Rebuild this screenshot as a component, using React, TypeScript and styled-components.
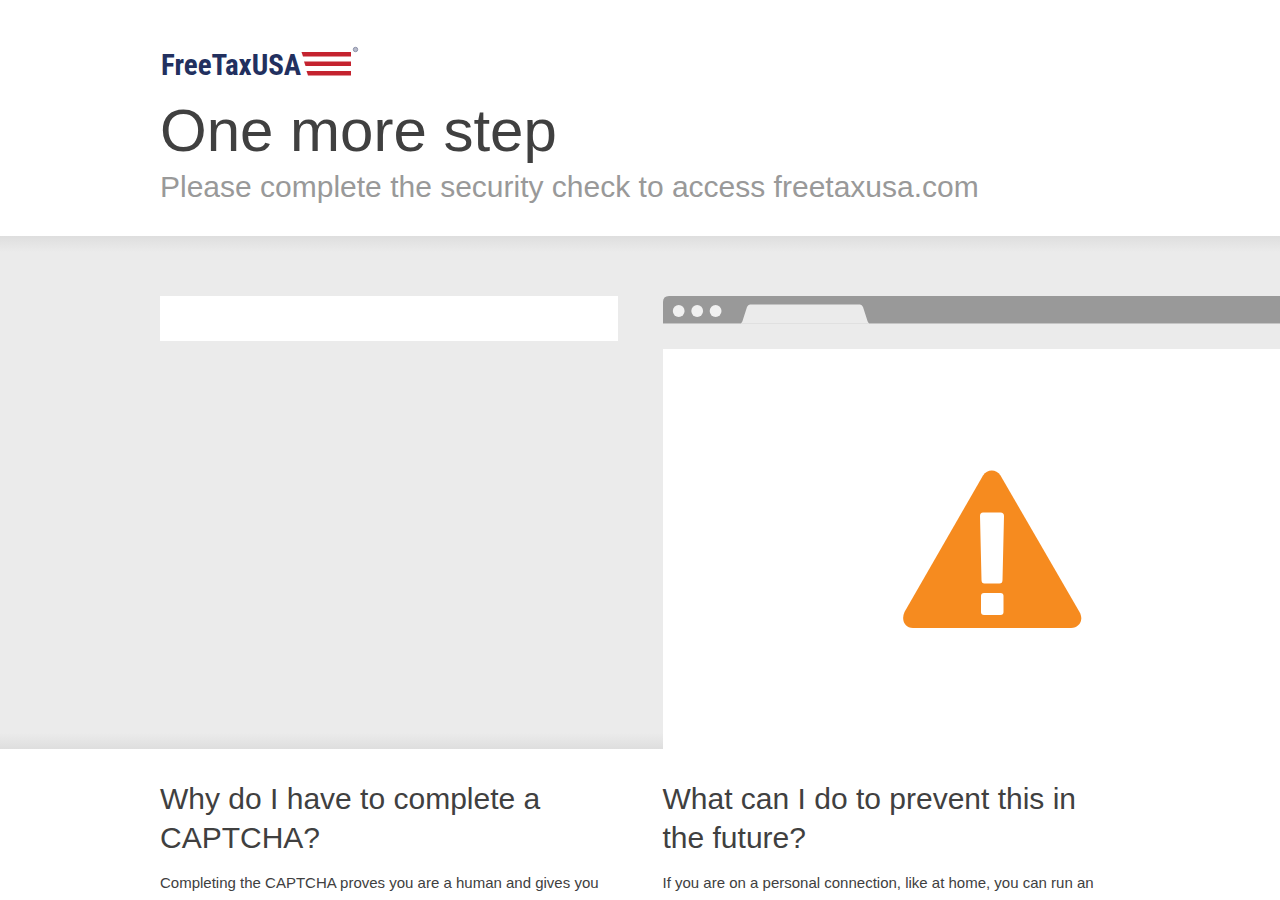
import React from "react";
import styled, { createGlobalStyle } from "styled-components";

const GlobalStyle = createGlobalStyle`
  *, *::before, *::after { box-sizing: border-box; }
  body {
    margin: 0;
    background: #fff;
    color: #404040;
    font-family: "Liberation Sans", Arial, sans-serif;
    font-size: 15px;
    line-height: 22px;
    overflow-x: hidden;
  }
  h1, h2, p { margin: 0; font-weight: 400; }
`;

const Wrapper = styled.div`
  width: 75%;
  max-width: 960px;
  margin: 0 auto;
`;

const Header = styled.header`
  padding: 40px 0 32px;
`;

const Logo = styled.svg`
  display: block;
  width: 200px;
  height: 44px;
`;

const Title = styled.h1`
  margin-top: 8px;
  font-size: 60px;
  line-height: 78px;
`;

const Subtitle = styled.h2`
  color: #999;
  font-size: 30px;
  line-height: 34px;
`;

const Challenge = styled.section`
  padding-top: 60px;
  overflow: hidden;
  background:
    linear-gradient(to bottom, #dedede, #ebebeb 16px, #ebebeb calc(100% - 16px), #dedede);
`;

const Columns = styled.div`
  display: grid;
  grid-template-columns: minmax(0, 1fr) minmax(0, 1fr);
  column-gap: 45px;
  align-items: start;
`;

const CaptchaBox = styled.div`
  height: 45px;
  background: #fff;
`;

const BrowserWindow = styled.div`
  width: 658px;
`;

const BrowserBar = styled.svg`
  display: block;
  width: 658px;
  height: 28px;
`;

const BrowserPage = styled.div`
  display: flex;
  justify-content: center;
  height: 400px;
  margin-top: 25px;
  padding-top: 121px;
  background: #fff;
`;

const WarningSign = styled.svg`
  width: 180px;
  height: 160px;
`;

const Answers = styled.main`
  padding: 30px 0;
`;

const Question = styled.h2`
  margin-bottom: 15px;
  font-size: 30px;
  line-height: 39px;
`;

const Answer = styled.p`
  font-size: 15px;
  line-height: 22px;
`;

const questions = [
  {
    title: "Why do I have to complete a CAPTCHA?",
    text: "Completing the CAPTCHA proves you are a human and gives you",
  },
  {
    title: "What can I do to prevent this in the future?",
    text: "If you are on a personal connection, like at home, you can run an",
  },
];

function FreeTaxLogo() {
  return (
    <Logo viewBox="0 0 200 44" role="img" aria-label="FreeTaxUSA">
      <text
        x="1"
        y="35"
        fill="#22305f"
        fontFamily="'Roboto Condensed', 'Liberation Sans', sans-serif"
        fontSize="29"
        fontWeight="700"
      >
        FreeTaxUSA
      </text>
      <g fill="#c4232f">
        <path d="M141.500 12H191v4.500H143z" />
        <path d="M144 21.500H191v4.500H145.500z" />
        <path d="M146.500 31H191v4.500H148z" />
      </g>
      <circle cx="195.500" cy="9.500" r="2.200" fill="#b9bccb" stroke="#8d92aa" />
    </Logo>
  );
}

function BrowserChrome() {
  return (
    <BrowserBar viewBox="0 0 658 28" aria-hidden="true">
      <path d="M0 28V6Q0 0 6 0H652Q658 0 658 6V28Z" fill="#999" />
      <path d="M0 27.500H658" stroke="#c4c4c4" />
      <path d="M78 27Q79 27 79.500 25L84 11Q85 8.500 87 8.500H197Q199 8.500 200 11L204.500 25Q205 27 206 27Z" fill="#ebebeb" />
      <path d="M78 27.500H206" stroke="#e0e0e0" />
      <g fill="#f1f1f1">
        <circle cx="15.700" cy="15" r="5.900" />
        <circle cx="34.200" cy="15" r="5.900" />
        <circle cx="52.600" cy="15" r="5.900" />
      </g>
    </BrowserBar>
  );
}

function Warning() {
  return (
    <WarningSign viewBox="0 0 180 160" role="img" aria-label="Warning">
      <path
        d="M81 5.500C85.500-1.200 94-1.200 98.500 5.500L177.500 142C182 150 177.500 158 169 158H11C2.500 158-1 150 2.500 142Z"
        fill="#f68b1f"
      />
      <path
        d="M81 42.500H98.500Q102 42.500 102 46L100.500 110Q100.500 113.500 97.500 113.500H82.500Q79.500 113.500 79.500 110L78 46Q78 42.500 81 42.500Z"
        fill="#fff"
      />
      <rect x="79" y="123" width="22.500" height="22" rx="3" fill="#fff" />
    </WarningSign>
  );
}

export default function App() {
  return (
    <>
      <GlobalStyle />
      <Header>
        <Wrapper>
          <FreeTaxLogo />
          <Title>One more step</Title>
          <Subtitle>Please complete the security check to access freetaxusa.com</Subtitle>
        </Wrapper>
      </Header>
      <Challenge>
        <Wrapper>
          <Columns>
            <CaptchaBox />
            <BrowserWindow>
              <BrowserChrome />
              <BrowserPage>
                <Warning />
              </BrowserPage>
            </BrowserWindow>
          </Columns>
        </Wrapper>
      </Challenge>
      <Answers>
        <Wrapper>
          <Columns>
            {questions.map((question) => (
              <article key={question.title}>
                <Question>{question.title}</Question>
                <Answer>{question.text}</Answer>
              </article>
            ))}
          </Columns>
        </Wrapper>
      </Answers>
    </>
  );
}
